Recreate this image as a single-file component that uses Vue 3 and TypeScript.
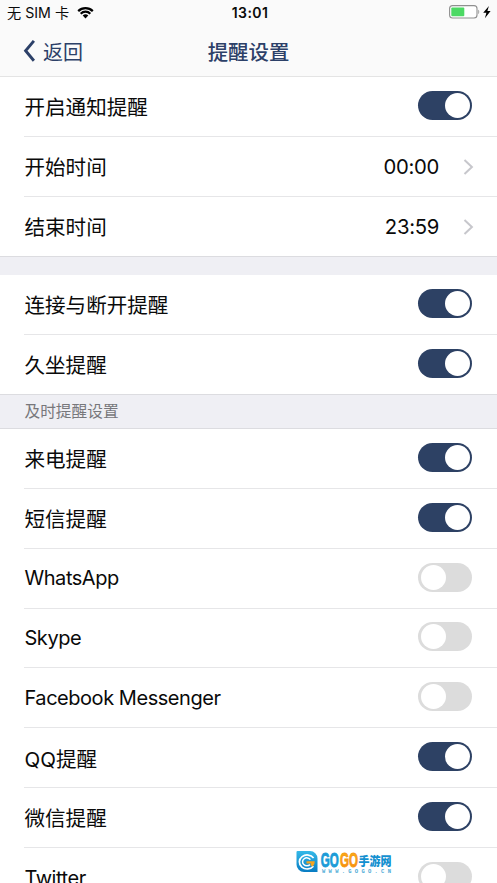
<script setup lang="ts">
interface Row {
  label: string
  on?: boolean
  time?: string
}

interface Group {
  id: string
  title?: string
  rows: Row[]
}

const groups: Group[] = [
  {
    id: 'general',
    rows: [
      { label: '开启通知提醒', on: true },
      { label: '开始时间', time: '00:00' },
      { label: '结束时间', time: '23:59' },
    ],
  },
  {
    id: 'device',
    rows: [
      { label: '连接与断开提醒', on: true },
      { label: '久坐提醒', on: true },
    ],
  },
  {
    id: 'instant',
    title: '及时提醒设置',
    rows: [
      { label: '来电提醒', on: true },
      { label: '短信提醒', on: true },
      { label: 'WhatsApp', on: false },
      { label: 'Skype', on: false },
      { label: 'Facebook Messenger', on: false },
      { label: 'QQ提醒', on: true },
      { label: '微信提醒', on: true },
      { label: 'Twitter', on: false },
    ],
  },
]
</script>

<template>
  <div class="screen">
    <header class="top">
      <div class="status">
        <div class="carrier">
          <span>无 SIM 卡</span>
          <svg class="wifi" width="17" height="13" viewBox="0 0 17 13">
            <path d="M1.2 5.1a10.4 10.4 0 0 1 14.6 0" />
            <path d="M3.7 7.7a6.8 6.8 0 0 1 9.6 0" />
            <path class="dot" d="M8.5 12.4 5.7 9.6a4 4 0 0 1 5.6 0z" />
          </svg>
        </div>
        <span class="clock">13:01</span>
        <div class="power">
          <svg width="44" height="15" viewBox="0 0 44 15">
            <rect x="1.6" y="0.6" width="27.4" height="12.4" rx="3" fill="#fff" stroke="#8f8f8f" stroke-width="1.1" />
            <rect x="3.3" y="2.4" width="13" height="8.8" rx="1" fill="#4cd964" />
            <path d="M30.3 4.8v4.2c1.2-.4 1.2-3.8 0-4.2z" fill="#8f8f8f" />
            <path d="M40.9 1 35.2 7.8h3.2l-1.5 5.4 5.7-7.1h-3.2z" fill="#000" />
          </svg>
        </div>
      </div>
      <nav class="nav">
        <div class="back">
          <svg width="13" height="22" viewBox="0 0 13 22"><path d="M10.9 0.9 2.6 10.8l8.3 9.9" /></svg>
          <span>返回</span>
        </div>
        <h1>提醒设置</h1>
      </nav>
    </header>

    <section v-for="group in groups" :key="group.id" class="group" :class="group.id">
      <h2 v-if="group.title">{{ group.title }}</h2>
      <div v-for="row in group.rows" :key="row.label" class="row">
        <span class="label" :class="{ latin: /^[A-Z][a-z]/.test(row.label) }">{{ row.label }}</span>
        <div v-if="row.time" class="value">
          <span>{{ row.time }}</span>
          <svg width="11" height="16" viewBox="0 0 11 16"><path d="m1.5 1 7.4 7-7.4 7" /></svg>
        </div>
        <div v-else class="switch" :class="{ on: row.on }"><i></i></div>
      </div>
    </section>

    <svg class="watermark" width="98" height="24" viewBox="0 0 98 24">
      <defs>
        <linearGradient id="blue" x1="0" y1="0" x2="0" y2="1">
          <stop offset="0" stop-color="#35b9e8" />
          <stop offset="1" stop-color="#087cc3" />
        </linearGradient>
        <linearGradient id="orange" x1="0" y1="0" x2="0" y2="1">
          <stop offset="0" stop-color="#fbb51c" />
          <stop offset="1" stop-color="#f5840c" />
        </linearGradient>
      </defs>
      <path d="M1.5 0H14a7.5 7.5 0 0 1 7.5 7.5V21H8A7.5 7.5 0 0 1 .5 13.5V1a1 1 0 0 1 1-1z" fill="url(#blue)" />
      <path d="M17.6 7A7.8 7 0 1 0 17.4 15.2" fill="none" stroke="#fff" stroke-width="1.7" />
      <path d="M14.4 8.6A4.3 4 0 1 0 14 13.6" fill="none" stroke="#fff" stroke-width="1.5" />
      <path d="M10.5 10.2h8.2c0 2.6-.8 4.2-2.3 5.3l-2-1.5.8-1.5h-4.7z" fill="#f7a41e" />
      <text class="go" x="24.7" y="16.4" textLength="18" lengthAdjust="spacingAndGlyphs" fill="#1c9cd8" stroke="#1c9cd8">GO</text>
      <text class="go" x="44" y="16.4" textLength="18" lengthAdjust="spacingAndGlyphs" fill="url(#orange)" stroke="#f7990f">GO</text>
      <text class="cn" x="62.5" y="15.3" textLength="33" lengthAdjust="spacingAndGlyphs">手游网</text>
      <text class="url" x="26" y="22.4" textLength="69">WWW.GOGO.CN</text>
    </svg>
  </div>
</template>

<style>
body {
  overflow: hidden;
}
</style>

<style scoped>
.screen {
  position: relative;
  width: 497px;
  height: 883px;
  overflow: hidden;
  background: #fff;
  color: #0a0a0a;
  font-family: Inter, 'Noto Sans CJK SC', sans-serif;
}

.top {
  box-sizing: border-box;
  height: 77px;
  background: #fafafa;
  border-bottom: 1px solid #e4e4e4;
}

.status {
  display: grid;
  grid-template-columns: 1fr auto 1fr;
  align-items: center;
  height: 25px;
  padding: 0 5px 0 7px;
  font-size: 14.2px;
  line-height: 25px;
}

.carrier {
  display: flex;
  align-items: center;
  gap: 8px;
  white-space: nowrap;
}

.wifi path {
  fill: none;
  stroke: #000;
  stroke-width: 2.2;
}

.wifi .dot {
  fill: #000;
  stroke: none;
}

.clock {
  padding-left: 1px;
  font-weight: 600;
  font-size: 14px;
  letter-spacing: 0.4px;
}

.power {
  display: flex;
  justify-content: flex-end;
}

.nav {
  display: grid;
  grid-template-columns: 1fr auto 1fr;
  align-items: center;
  height: 52px;
  color: #2c4068;
}

.back {
  display: flex;
  align-items: center;
  gap: 7px;
  padding-left: 23px;
  font-size: 20px;
}

.back path {
  fill: none;
  stroke: #2c4068;
  stroke-width: 2.9;
}

h1 {
  margin: 0;
  font-size: 20.4px;
  font-weight: 500;
}

.group {
  border-bottom: 1px solid #dcdce0;
}

.device {
  border-top: 18px solid #efeff4;
}

h2 {
  box-sizing: border-box;
  height: 34px;
  margin: 0;
  padding-left: 24.5px;
  background: #efeff4;
  border-bottom: 1px solid #dcdce0;
  color: #77777b;
  font-size: 15.7px;
  font-weight: 400;
  line-height: 33px;
}

.row {
  box-sizing: border-box;
  display: flex;
  align-items: center;
  justify-content: space-between;
  height: 60px;
  margin-left: 24px;
  padding: 0 25px 0 0.5px;
  border-bottom: 1px solid #e6e6e8;
}

.row:last-child {
  height: 59px;
  border-bottom: 0;
}

.instant .row {
  height: 59.85px;
}

.label {
  margin-bottom: 1px;
  font-size: 20.55px;
}

.instant .label {
  margin-bottom: 0;
}

.label.latin {
  font-size: 20px;
  letter-spacing: -0.46px;
}

.value {
  display: flex;
  align-items: center;
  gap: 24px;
  margin-right: -2px;
  font-size: 20.3px;
  letter-spacing: -0.3px;
}

.value path {
  fill: none;
  stroke: #c7c7cc;
  stroke-width: 2;
}

.switch {
  box-sizing: border-box;
  display: flex;
  width: 54px;
  height: 29px;
  margin-bottom: 2px;
  padding: 2px 2.5px;
  border-radius: 15px;
  background: #dcdcdc;
}

.switch.on {
  justify-content: flex-end;
  background: #2d4164;
}

.switch i {
  width: 25px;
  height: 25px;
  border-radius: 50%;
  background: #fff;
}

.watermark {
  position: absolute;
  left: 296px;
  top: 851px;
}

.go {
  font: 700 19.5px 'Liberation Sans', sans-serif;
  stroke-width: 0.9;
}

.cn {
  fill: #1490d0;
  font: 900 12.5px 'Noto Sans CJK SC', sans-serif;
}

.url {
  fill: #4eabd6;
  font: 700 5.5px 'Liberation Mono', monospace;
}
</style>
